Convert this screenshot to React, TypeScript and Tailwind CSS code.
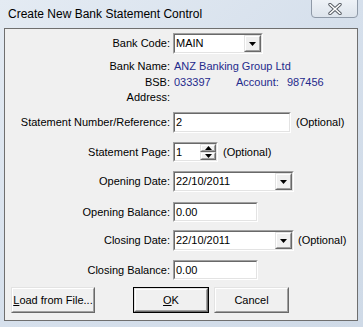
import React from "react";

const font = { fontFamily: '"Liberation Sans", Arial, sans-serif' };

function Sunken({ className = "", children }: { className?: string; children?: React.ReactNode }) {
  return (
    <div className={`border border-t-[#a0a0a0] border-l-[#a0a0a0] border-r-white border-b-white ${className}`}>
      <div className="h-full border border-t-[#696969] border-l-[#696969] border-r-[#e3e3e3] border-b-[#e3e3e3] bg-white flex items-center">
        {children}
      </div>
    </div>
  );
}

function Raised({ className = "", children }: { className?: string; children?: React.ReactNode }) {
  return (
    <div className={`border border-t-[#e3e3e3] border-l-[#e3e3e3] border-r-[#696969] border-b-[#696969] ${className}`}>
      <div className="h-full w-full border border-t-white border-l-white border-r-[#a0a0a0] border-b-[#a0a0a0] bg-[#f0f0f0] flex items-center justify-center">
        {children}
      </div>
    </div>
  );
}

function DownArrow() {
  return (
    <svg width="7" height="4" viewBox="0 0 7 4">
      <path d="M0 0h7L3.5 4z" fill="#000" />
    </svg>
  );
}

function UpArrow() {
  return (
    <svg width="7" height="4" viewBox="0 0 7 4">
      <path d="M0 4h7L3.5 0z" fill="#000" />
    </svg>
  );
}

function Combo({ value, width }: { value: string; width: string }) {
  return (
    <Sunken className={`${width} h-[21px]`}>
      <span className="flex-1 pl-[1px] text-[11px] leading-none text-black">{value}</span>
      <Raised className="w-[17px] h-[17px]">
        <DownArrow />
      </Raised>
    </Sunken>
  );
}

function Label({ children }: { children: React.ReactNode }) {
  return <div className="w-[165px] shrink-0 text-right text-[11px] leading-none text-black">{children}</div>;
}

function Row({ className = "", children }: { className?: string; children: React.ReactNode }) {
  return <div className={`flex items-center gap-[3px] ${className}`}>{children}</div>;
}

export default function App() {
  return (
    <div style={font} className="w-[363px] h-[327px] bg-[#d8e2ed] relative overflow-hidden">
      <div className="absolute inset-0 bg-gradient-to-br from-[#e4ebf3] via-[#d6e0ec] to-[#cfdae7]" />
      <div className="relative flex flex-col h-full">
        {/* Title bar */}
        <div className="h-[28px] flex items-start shrink-0">
          <div className="pl-[8px] pt-[6px] text-[12px] leading-[16px] text-black">Create New Bank Statement Control</div>
          <div className="ml-auto mr-[5px] w-[47px] h-[19px] -mt-px rounded-b-[4px] border border-[#8f9aa8] bg-gradient-to-b from-[#eef2f7] to-[#dde4ec] flex items-center justify-center">
            <svg width="16" height="12" viewBox="0 0 16 12">
              <path d="M3 1.5L13 10.5M13 1.5L3 10.5" stroke="#555b63" strokeWidth="3.4" strokeLinecap="round" />
              <path d="M3 1.5L13 10.5M13 1.5L3 10.5" stroke="#ffffff" strokeWidth="1.6" strokeLinecap="round" />
            </svg>
          </div>
        </div>
        {/* Client area */}
        <div className="ml-[4px] mr-[5px] h-[293px] border border-[#6f6f6f] bg-[#f0f0f0] flex flex-col pt-[4px]">
          <Row className="h-[21px]">
            <Label>Bank Code:</Label>
            <Combo value="MAIN" width="w-[90px]" />
          </Row>
          <Row className="h-[16px] mt-[4px]">
            <Label>Bank Name:</Label>
            <span className="text-[11px] leading-none text-[#1f2a8c] pl-[1px]">ANZ Banking Group Ltd</span>
          </Row>
          <Row className="h-[16px]">
            <Label>BSB:</Label>
            <span className="text-[11px] leading-none text-[#1f2a8c] pl-[1px] w-[60px]">033397</span>
            <span className="text-[11px] leading-none text-[#1f2a8c] w-[48px]">Account:</span>
            <span className="text-[11px] leading-none text-[#1f2a8c]">987456</span>
          </Row>
          <Row className="h-[15px]">
            <Label>Address:</Label>
          </Row>
          <Row className="h-[21px] mt-[7px]">
            <Label>Statement Number/Reference:</Label>
            <Sunken className="w-[118px] h-[21px]">
              <span className="pl-[1px] text-[11px] leading-none">2</span>
            </Sunken>
            <span className="ml-[2px] text-[11px] leading-none">(Optional)</span>
          </Row>
          <Row className="h-[20px] mt-[9px]">
            <Label>Statement Page:</Label>
            <Sunken className="w-[45px] h-[20px]">
              <span className="flex-1 pl-[1px] text-[11px] leading-none">1</span>
              <div className="flex flex-col w-[16px] h-full">
                <Raised className="w-[16px] h-[9px]">
                  <UpArrow />
                </Raised>
                <Raised className="w-[16px] h-[9px]">
                  <DownArrow />
                </Raised>
              </div>
            </Sunken>
            <span className="ml-[2px] text-[11px] leading-none">(Optional)</span>
          </Row>
          <Row className="h-[21px] mt-[9px]">
            <Label>Opening Date:</Label>
            <Combo value="22/10/2011" width="w-[121px]" />
          </Row>
          <Row className="h-[20px] mt-[10px]">
            <Label>Opening Balance:</Label>
            <Sunken className="w-[85px] h-[20px]">
              <span className="pl-[1px] text-[11px] leading-none">0.00</span>
            </Sunken>
          </Row>
          <Row className="h-[21px] mt-[8px]">
            <Label>Closing Date:</Label>
            <Combo value="22/10/2011" width="w-[121px]" />
            <span className="ml-[1px] text-[11px] leading-none">(Optional)</span>
          </Row>
          <Row className="h-[20px] mt-[9px]">
            <Label>Closing Balance:</Label>
            <Sunken className="w-[85px] h-[20px]">
              <span className="pl-[1px] text-[11px] leading-none">0.00</span>
            </Sunken>
          </Row>
          <div className="flex mt-[7px] h-[26px] pl-[6px]">
            <Raised className="w-[84px] h-[26px]">
              <span className="text-[11px] leading-none">
                <span className="underline">L</span>oad from File...
              </span>
            </Raised>
            <div className="ml-[38px] border border-black w-[76px] h-[26px]">
              <Raised className="w-full h-full">
                <span className="text-[11px] leading-none">
                  <span className="underline">O</span>K
                </span>
              </Raised>
            </div>
            <Raised className="ml-[5px] w-[75px] h-[26px]">
              <span className="text-[11px] leading-none">Cancel</span>
            </Raised>
          </div>
        </div>
      </div>
    </div>
  );
}
